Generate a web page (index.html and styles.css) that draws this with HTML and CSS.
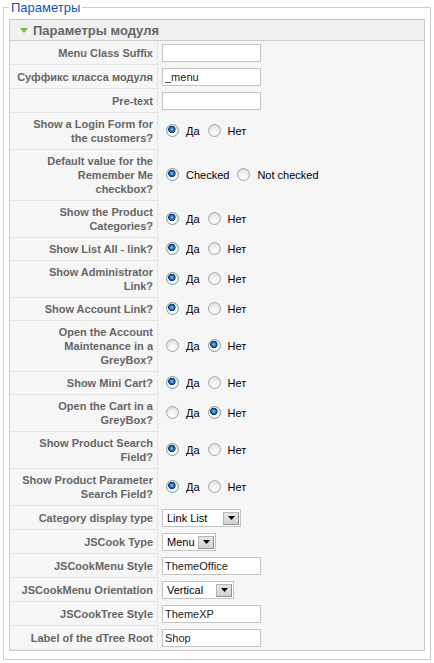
FILE: index.html
```html
<!DOCTYPE html>
<html>
<head>
<meta charset="utf-8">
<title>Параметры</title>
<link rel="stylesheet" href="styles.css">
</head>
<body>
<fieldset class="params">
  <legend>Параметры</legend>
  <div class="pane">
    <h3 class="pane-title"><span class="toggle"></span>Параметры модуля</h3>
    <table class="paramlist">
      <tr><td class="key">Menu Class Suffix</td><td class="val"><input class="text" type="text" value=""></td></tr>
      <tr><td class="key">Суффикс класса модуля</td><td class="val"><input class="text" type="text" value="_menu"></td></tr>
      <tr><td class="key">Pre-text</td><td class="val"><input class="text" type="text" value=""></td></tr>
      <tr><td class="key">Show a Login Form for<br>the customers?</td><td class="val"><label class="opt"><input type="radio" name="r1" checked><span>Да</span></label><label class="opt"><input type="radio" name="r1"><span>Нет</span></label></td></tr>
      <tr><td class="key">Default value for the<br>Remember Me<br>checkbox?</td><td class="val"><label class="opt"><input type="radio" name="r2" checked><span>Checked</span></label><label class="opt"><input type="radio" name="r2"><span>Not checked</span></label></td></tr>
      <tr><td class="key">Show the Product<br>Categories?</td><td class="val"><label class="opt"><input type="radio" name="r3" checked><span>Да</span></label><label class="opt"><input type="radio" name="r3"><span>Нет</span></label></td></tr>
      <tr><td class="key">Show List All - link?</td><td class="val"><label class="opt"><input type="radio" name="r4" checked><span>Да</span></label><label class="opt"><input type="radio" name="r4"><span>Нет</span></label></td></tr>
      <tr><td class="key">Show Administrator<br>Link?</td><td class="val"><label class="opt"><input type="radio" name="r5" checked><span>Да</span></label><label class="opt"><input type="radio" name="r5"><span>Нет</span></label></td></tr>
      <tr><td class="key">Show Account Link?</td><td class="val"><label class="opt"><input type="radio" name="r6" checked><span>Да</span></label><label class="opt"><input type="radio" name="r6"><span>Нет</span></label></td></tr>
      <tr><td class="key">Open the Account<br>Maintenance in a<br>GreyBox?</td><td class="val"><label class="opt"><input type="radio" name="r7"><span>Да</span></label><label class="opt"><input type="radio" name="r7" checked><span>Нет</span></label></td></tr>
      <tr><td class="key">Show Mini Cart?</td><td class="val"><label class="opt"><input type="radio" name="r8" checked><span>Да</span></label><label class="opt"><input type="radio" name="r8"><span>Нет</span></label></td></tr>
      <tr><td class="key">Open the Cart in a<br>GreyBox?</td><td class="val"><label class="opt"><input type="radio" name="r9"><span>Да</span></label><label class="opt"><input type="radio" name="r9" checked><span>Нет</span></label></td></tr>
      <tr><td class="key">Show Product Search<br>Field?</td><td class="val"><label class="opt"><input type="radio" name="r10" checked><span>Да</span></label><label class="opt"><input type="radio" name="r10"><span>Нет</span></label></td></tr>
      <tr><td class="key">Show Product Parameter<br>Search Field?</td><td class="val"><label class="opt"><input type="radio" name="r11" checked><span>Да</span></label><label class="opt"><input type="radio" name="r11"><span>Нет</span></label></td></tr>
      <tr><td class="key">Category display type</td><td class="val"><span class="select w-linklist"><span class="sel-value">Link List</span><span class="sel-btn"><svg width="7" height="4" viewBox="0 0 7 4"><path d="M0 0H7L3.5 4Z" fill="#000"/></svg></span></span></td></tr>
      <tr><td class="key">JSCook Type</td><td class="val"><span class="select w-menu"><span class="sel-value">Menu</span><span class="sel-btn"><svg width="7" height="4" viewBox="0 0 7 4"><path d="M0 0H7L3.5 4Z" fill="#000"/></svg></span></span></td></tr>
      <tr><td class="key">JSCookMenu Style</td><td class="val"><input class="text" type="text" value="ThemeOffice"></td></tr>
      <tr><td class="key">JSCookMenu Orientation</td><td class="val"><span class="select w-vertical"><span class="sel-value">Vertical</span><span class="sel-btn"><svg width="7" height="4" viewBox="0 0 7 4"><path d="M0 0H7L3.5 4Z" fill="#000"/></svg></span></span></td></tr>
      <tr><td class="key">JSCookTree Style</td><td class="val"><input class="text" type="text" value="ThemeXP"></td></tr>
      <tr><td class="key">Label of the dTree Root</td><td class="val"><input class="text" type="text" value="Shop"></td></tr>
    </table>
  </div>
</fieldset>
</body>
</html>
```

FILE: styles.css
```css
html, body {
  margin: 0;
  padding: 0;
  background: #fff;
  font-family: "Liberation Sans", Arial, sans-serif;
  font-size: 11px;
  color: #000;
}

.params {
  margin: 0 3px;
  border: 1px solid #cccccc;
  padding: 4px 5px 8px 5px;
  min-width: 0;
}

.params legend {
  color: #0b55c4;
  font-size: 13px;
  line-height: 15px;
  padding: 0 2px;
}

.pane {
  border: 1px solid #cccccc;
  background: #f6f6f6;
}

.pane-title {
  margin: 0;
  height: 20px;
  display: flex;
  align-items: center;
  padding-left: 10px;
  background: #f0f0f0;
  border-bottom: 1px solid #cccccc;
  color: #666666;
  font-size: 13px;
  font-weight: bold;
}

.toggle {
  width: 0;
  height: 0;
  border-left: 4px solid transparent;
  border-right: 4px solid transparent;
  border-top: 5px solid #7cb342;
  margin-right: 5px;
}

.paramlist {
  width: 100%;
  border-collapse: separate;
  border-spacing: 0;
  table-layout: fixed;
}

.paramlist td {
  vertical-align: middle;
}

.paramlist .key {
  width: 138px;
  padding: 4px 4px 4px 5px;
  line-height: 14px;
  text-align: right;
  font-weight: bold;
  color: #666666;
  border-right: 1px solid #e4e4e4;
  border-bottom: 1px solid #e4e4e4;
}

.paramlist .val {
  padding: 3px 4px;
  line-height: 14px;
}

.text {
  box-sizing: border-box;
  width: 99px;
  height: 18px;
  margin: 0;
  padding: 0 2px;
  border: 1px solid #c4c4c4;
  background: #fff;
  font-family: "Liberation Sans", Arial, sans-serif;
  font-size: 11px;
  color: #222;
  display: block;
}

.opt {
  display: inline-flex;
  align-items: center;
  margin-right: 4px;
}

.opt input {
  appearance: none;
  -webkit-appearance: none;
  box-sizing: border-box;
  width: 13px;
  height: 13px;
  margin: 0 7px 2px 4px;
  border-radius: 50%;
  border: 1px solid #a8a8a8;
  background: radial-gradient(circle at 50% 75%, #ffffff 0, #f2f2f2 40%, #d6d6d6 100%);
}

.opt input:checked {
  border-color: #8f9aa5;
  background:
    radial-gradient(circle at 44% 40%, #a8dcff 0, #3d93d6 1.2px, #14589a 2.6px, #0b3766 3.4px, rgba(11,55,102,0) 4px),
    radial-gradient(circle at 50% 75%, #ffffff 0, #f2f2f2 40%, #d6d6d6 100%);
}

.select {
  box-sizing: border-box;
  display: flex;
  align-items: center;
  justify-content: space-between;
  height: 18px;
  border: 1px solid #c4c4c4;
  background: #fff;
  padding-left: 4px;
  color: #000;
}

.w-linklist { width: 79px; }
.w-menu { width: 54px; }
.w-vertical { width: 72px; }

.sel-btn {
  box-sizing: border-box;
  width: 16px;
  height: 13px;
  margin-right: 1px;
  display: flex;
  align-items: center;
  justify-content: center;
  background: linear-gradient(#e6e6e6, #d2d2d2);
  border: 1px solid #8f8f8f;
  border-top-color: #b5b5b5;
  border-left-color: #b5b5b5;
}
```
